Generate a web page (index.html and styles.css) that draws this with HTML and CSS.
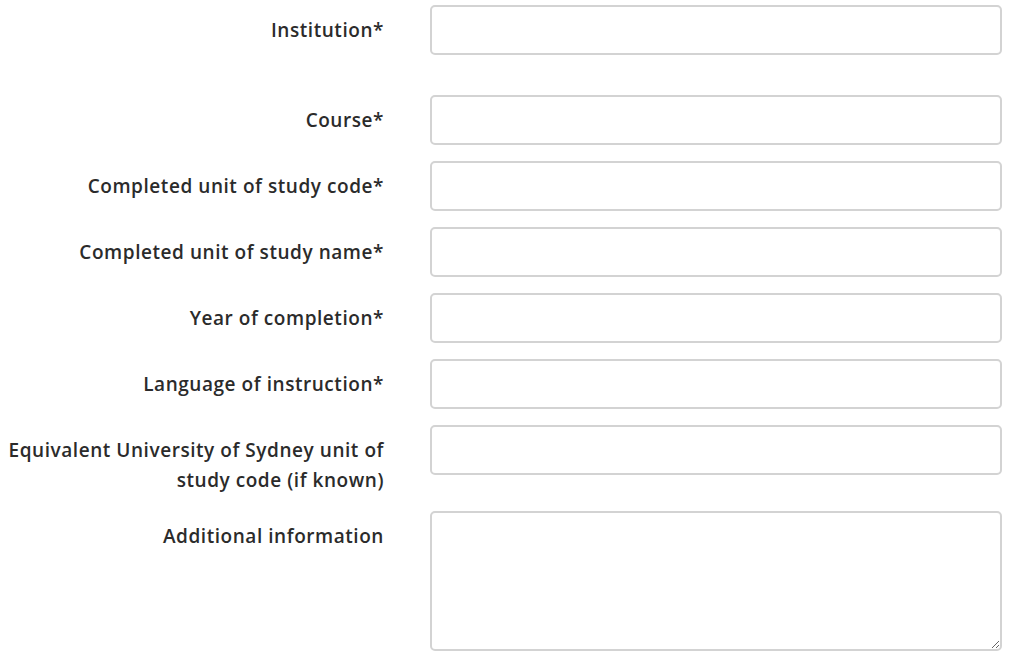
FILE: index.html
```html
<!DOCTYPE html>
<html>
<head>
<meta charset="utf-8">
<link rel="stylesheet" href="styles.css">
</head>
<body>
<form class="form">
  <div class="row row-first">
    <label class="label">Institution*</label>
    <div class="field"><input class="input" type="text"></div>
  </div>
  <div class="row">
    <label class="label">Course*</label>
    <div class="field"><input class="input" type="text"></div>
  </div>
  <div class="row">
    <label class="label">Completed unit of study code*</label>
    <div class="field"><input class="input" type="text"></div>
  </div>
  <div class="row">
    <label class="label">Completed unit of study name*</label>
    <div class="field"><input class="input" type="text"></div>
  </div>
  <div class="row">
    <label class="label">Year of completion*</label>
    <div class="field"><input class="input" type="text"></div>
  </div>
  <div class="row">
    <label class="label">Language of instruction*</label>
    <div class="field"><input class="input" type="text"></div>
  </div>
  <div class="row">
    <label class="label">Equivalent University of Sydney unit of study code (if known)</label>
    <div class="field"><input class="input" type="text"></div>
  </div>
  <div class="row">
    <label class="label">Additional information</label>
    <div class="field"><textarea class="textarea"></textarea></div>
  </div>
</form>
</body>
</html>
```
FILE: styles.css
```css
html, body {
  margin: 0;
  padding: 0;
  background: #fff;
}
body {
  font-family: "Open Sans", Lato, sans-serif;
  color: #2b2b2b;
}
.form {
  padding-top: 5px;
}
.row {
  display: grid;
  grid-template-columns: 384px 572px;
  column-gap: 46px;
  margin-bottom: 16px;
}
.row-first {
  margin-bottom: 40px;
}
.label {
  font-weight: 600;
  font-size: 19px;
  letter-spacing: 0.55px;
  line-height: 30px;
  text-align: right;
  padding-top: 10px;
  color: #2b2b2b;
}
.input, .textarea {
  display: block;
  box-sizing: border-box;
  width: 572px;
  border: 2px solid #d3d3d3;
  border-radius: 5px;
  background: #fff;
  margin: 0;
  font: inherit;
}
.input {
  height: 50px;
}
.textarea {
  height: 140px;
  resize: vertical;
}
```
